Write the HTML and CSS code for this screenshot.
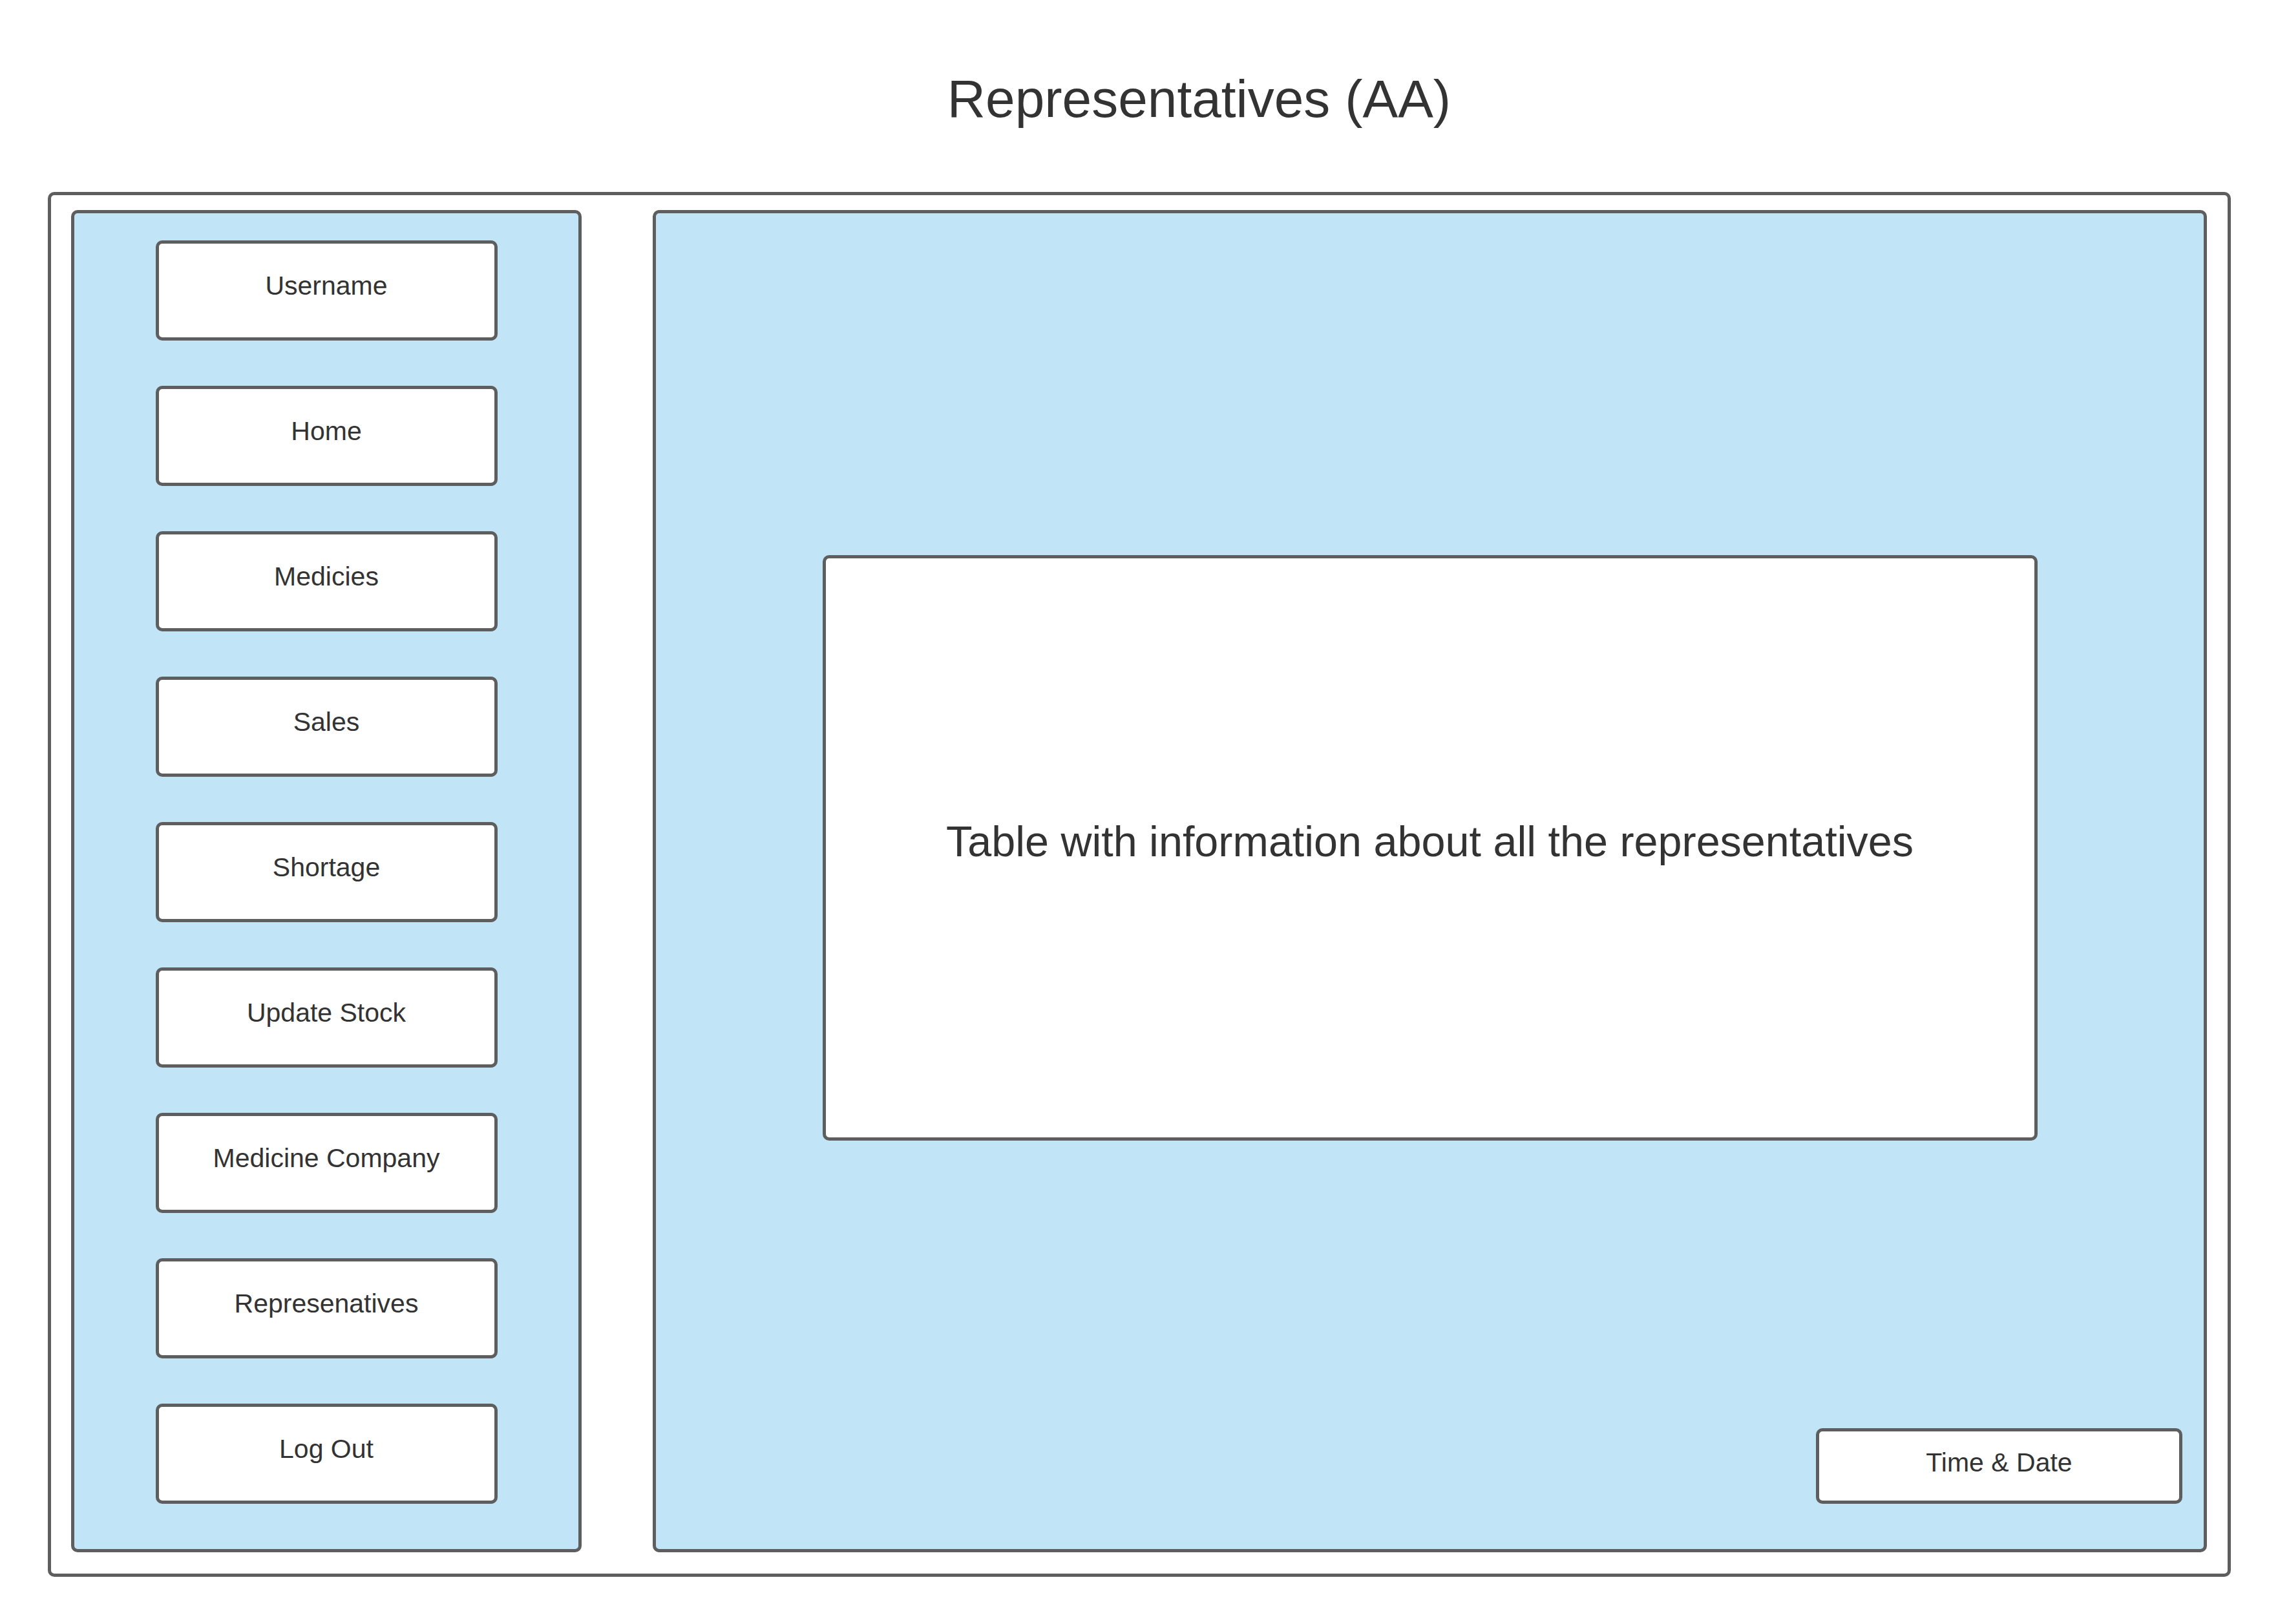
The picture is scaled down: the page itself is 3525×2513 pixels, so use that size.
FILE: index.html
```html
<!DOCTYPE html>
<html lang="en">
<head>
<meta charset="utf-8">
<title>Representatives (AA)</title>
<link rel="stylesheet" href="styles.css">
</head>
<body>
  <h1 class="title">Representatives (AA)</h1>
  <div class="frame">
    <nav class="sidebar">
      <div class="btn">Username</div>
      <div class="btn">Home</div>
      <div class="btn">Medicies</div>
      <div class="btn">Sales</div>
      <div class="btn">Shortage</div>
      <div class="btn">Update Stock</div>
      <div class="btn">Medicine Company</div>
      <div class="btn">Represenatives</div>
      <div class="btn">Log Out</div>
    </nav>
    <main class="content">
      <div class="table-box">Table with information about all the representatives</div>
      <div class="time-box">Time &amp; Date</div>
    </main>
  </div>
</body>
</html>
```

FILE: styles.css
```css
* { box-sizing: border-box; }

html, body {
  margin: 0;
  padding: 0;
  background: #ffffff;
}

body {
  width: 3525px;
  height: 2513px;
  font-family: "Liberation Sans", Arial, sans-serif;
  color: #333333;
}

.title {
  margin: 0;
  padding: 106px 0 0 186px;
  height: 297px;
  font-size: 82px;
  font-weight: normal;
  line-height: 93px;
  text-align: center;
  color: #333333;
}

.frame {
  margin-left: 74px;
  width: 3378px;
  height: 2143px;
  border: 5px solid #5e5e5e;
  border-radius: 10px;
  padding: 23px 32px 33px 31px;
  display: flex;
  gap: 110px;
}

.sidebar {
  width: 790px;
  flex: none;
  background: #c1e4f7;
  border: 5px solid #5e5e5e;
  border-radius: 10px;
  padding-top: 42px;
  display: flex;
  flex-direction: column;
  align-items: center;
  gap: 70px;
}

.btn {
  width: 529px;
  height: 155px;
  flex: none;
  background: #ffffff;
  border: 5px solid #5e5e5e;
  border-radius: 10px;
  display: flex;
  align-items: center;
  justify-content: center;
  padding-bottom: 13px;
  font-size: 41px;
  line-height: 1.15;
}

.content {
  flex: 1;
  background: #c1e4f7;
  border: 5px solid #5e5e5e;
  border-radius: 10px;
  padding: 529px 33px 70px;
  display: flex;
  flex-direction: column;
}

.table-box {
  align-self: center;
  width: 1880px;
  height: 906px;
  background: #ffffff;
  border: 5px solid #5e5e5e;
  border-radius: 10px;
  display: flex;
  align-items: center;
  justify-content: center;
  padding-bottom: 19px;
  font-size: 66.5px;
  line-height: 1.15;
}

.time-box {
  margin-top: auto;
  align-self: flex-end;
  width: 567px;
  height: 117px;
  background: #ffffff;
  border: 5px solid #5e5e5e;
  border-radius: 10px;
  display: flex;
  align-items: center;
  justify-content: center;
  padding-bottom: 10px;
  font-size: 41px;
  line-height: 1.15;
}
```
